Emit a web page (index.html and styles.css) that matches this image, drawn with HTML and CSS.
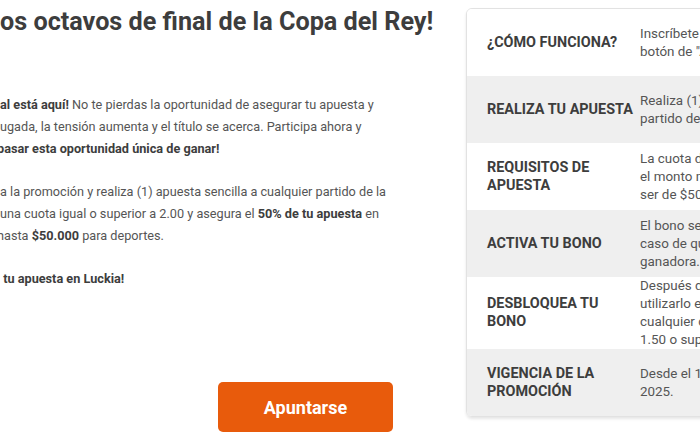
FILE: index.html
```html
<!DOCTYPE html>
<html lang="es">
<head>
    <meta charset="UTF-8">
    <meta name="viewport" content="width=device-width, initial-scale=1.0">
    <title>Copa del Rey - Octavos de final</title>
    <link rel="stylesheet" href="styles.css">
</head>
<body>

    <div class="page">
        <!-- Columna izquierda -->
        <div class="main">
            <h1 class="title">os octavos de final de la Copa del Rey!</h1>

            <p class="copy">
                <span class="line"><b>al está aquí!</b> No te pierdas la oportunidad de asegurar tu apuesta y</span>
                <span class="line">ugada, la tensión aumenta y el título se acerca. Participa ahora y</span>
                <span class="line cut"><b>pasar esta oportunidad única de ganar!</b></span>
            </p>

            <p class="copy">
                <span class="line">a la promoción y realiza (1) apuesta sencilla a cualquier partido de la</span>
                <span class="line">una cuota igual o superior a 2.00 y asegura el <b>50% de tu apuesta</b> en</span>
                <span class="line cut">hasta <b>$50.000</b> para deportes.</span>
            </p>

            <p class="copy">
                <span class="line"><b>&nbsp;tu apuesta en Luckia!</b></span>
            </p>

            <div class="actions">
                <a class="btn" href="#">Apuntarse</a>
            </div>
        </div>

        <!-- Tabla de condiciones -->
        <div class="terms">
            <div class="row">
                <div class="label">¿CÓMO FUNCIONA?</div>
                <div class="value">Inscríbete en la promoción haciendo clic en el<br>botón de "Apuntarse".</div>
            </div>
            <div class="row alt">
                <div class="label">REALIZA TU APUESTA</div>
                <div class="value">Realiza (1) apuesta sencilla a cualquier<br>partido de la Copa del Rey.</div>
            </div>
            <div class="row">
                <div class="label">REQUISITOS DE APUESTA</div>
                <div class="value">La cuota debe ser igual o superior a 2.00 y<br>el monto mínimo de la apuesta debe<br>ser de $50.000.</div>
            </div>
            <div class="row alt">
                <div class="label">ACTIVA TU BONO</div>
                <div class="value">El bono se acreditará en<br>caso de que la apuesta no resulte<br>ganadora.</div>
            </div>
            <div class="row">
                <div class="label">DESBLOQUEA TU BONO</div>
                <div class="value">Después de recibir el bono, deberás<br>utilizarlo en una apuesta sencilla a<br>cualquier competición con cuota de<br>1.50 o superior.</div>
            </div>
            <div class="row alt">
                <div class="label">VIGENCIA DE LA PROMOCIÓN</div>
                <div class="value">Desde el 13 de enero hasta el 16 de enero de<br>2025.</div>
            </div>
        </div>
    </div>

</body>
</html>
```

FILE: styles.css
```css
body {
    font-family: 'Roboto', 'Liberation Sans', sans-serif;
    background-color: #ffffff;
    color: #555555;
    margin: 0;
    padding: 0;
    overflow: hidden;
}
.page {
    display: flex;
    gap: 24px;
    width: 1100px;
}
.main {
    flex: 0 0 442px;
}
.title {
    margin: 7px 0 0;
    font-size: 25.2px;
    line-height: 30px;
    font-weight: 700;
    color: #3d3d3d;
    white-space: nowrap;
}
.copy {
    margin: 57px 0 0;
    font-size: 12.7px;
    line-height: 21.8px;
}
.copy + .copy {
    margin-top: 21.8px;
}
.copy b {
    color: #3d3d3d;
}
.line {
    display: block;
    white-space: nowrap;
}
.line.cut {
    margin-left: -3px;
}
.actions {
    display: flex;
    margin-top: 92px;
    padding-left: 218px;
}
.btn {
    display: flex;
    align-items: center;
    justify-content: center;
    width: 175px;
    height: 50px;
    background-color: #e85b0c;
    color: #ffffff;
    border-radius: 5px;
    font-size: 18px;
    font-weight: 700;
    text-decoration: none;
}
.terms {
    flex: 0 0 520px;
    margin-top: 8px;
    align-self: flex-start;
    border: 1px solid #e2e2e2;
    border-radius: 6px;
    box-shadow: 0 2px 3px rgba(0, 0, 0, 0.1);
    overflow: hidden;
}
.row {
    display: flex;
    align-items: center;
    min-height: 67px;
    background-color: #ffffff;
}
.row.alt {
    background-color: #efefef;
}
.label {
    flex: 0 0 147px;
    padding-left: 20px;
    font-size: 14.4px;
    line-height: 18px;
    font-weight: 700;
    color: #3d3d3d;
}
.value {
    padding-left: 6px;
    font-size: 13.4px;
    line-height: 18px;
    color: #555555;
    white-space: nowrap;
}
```
